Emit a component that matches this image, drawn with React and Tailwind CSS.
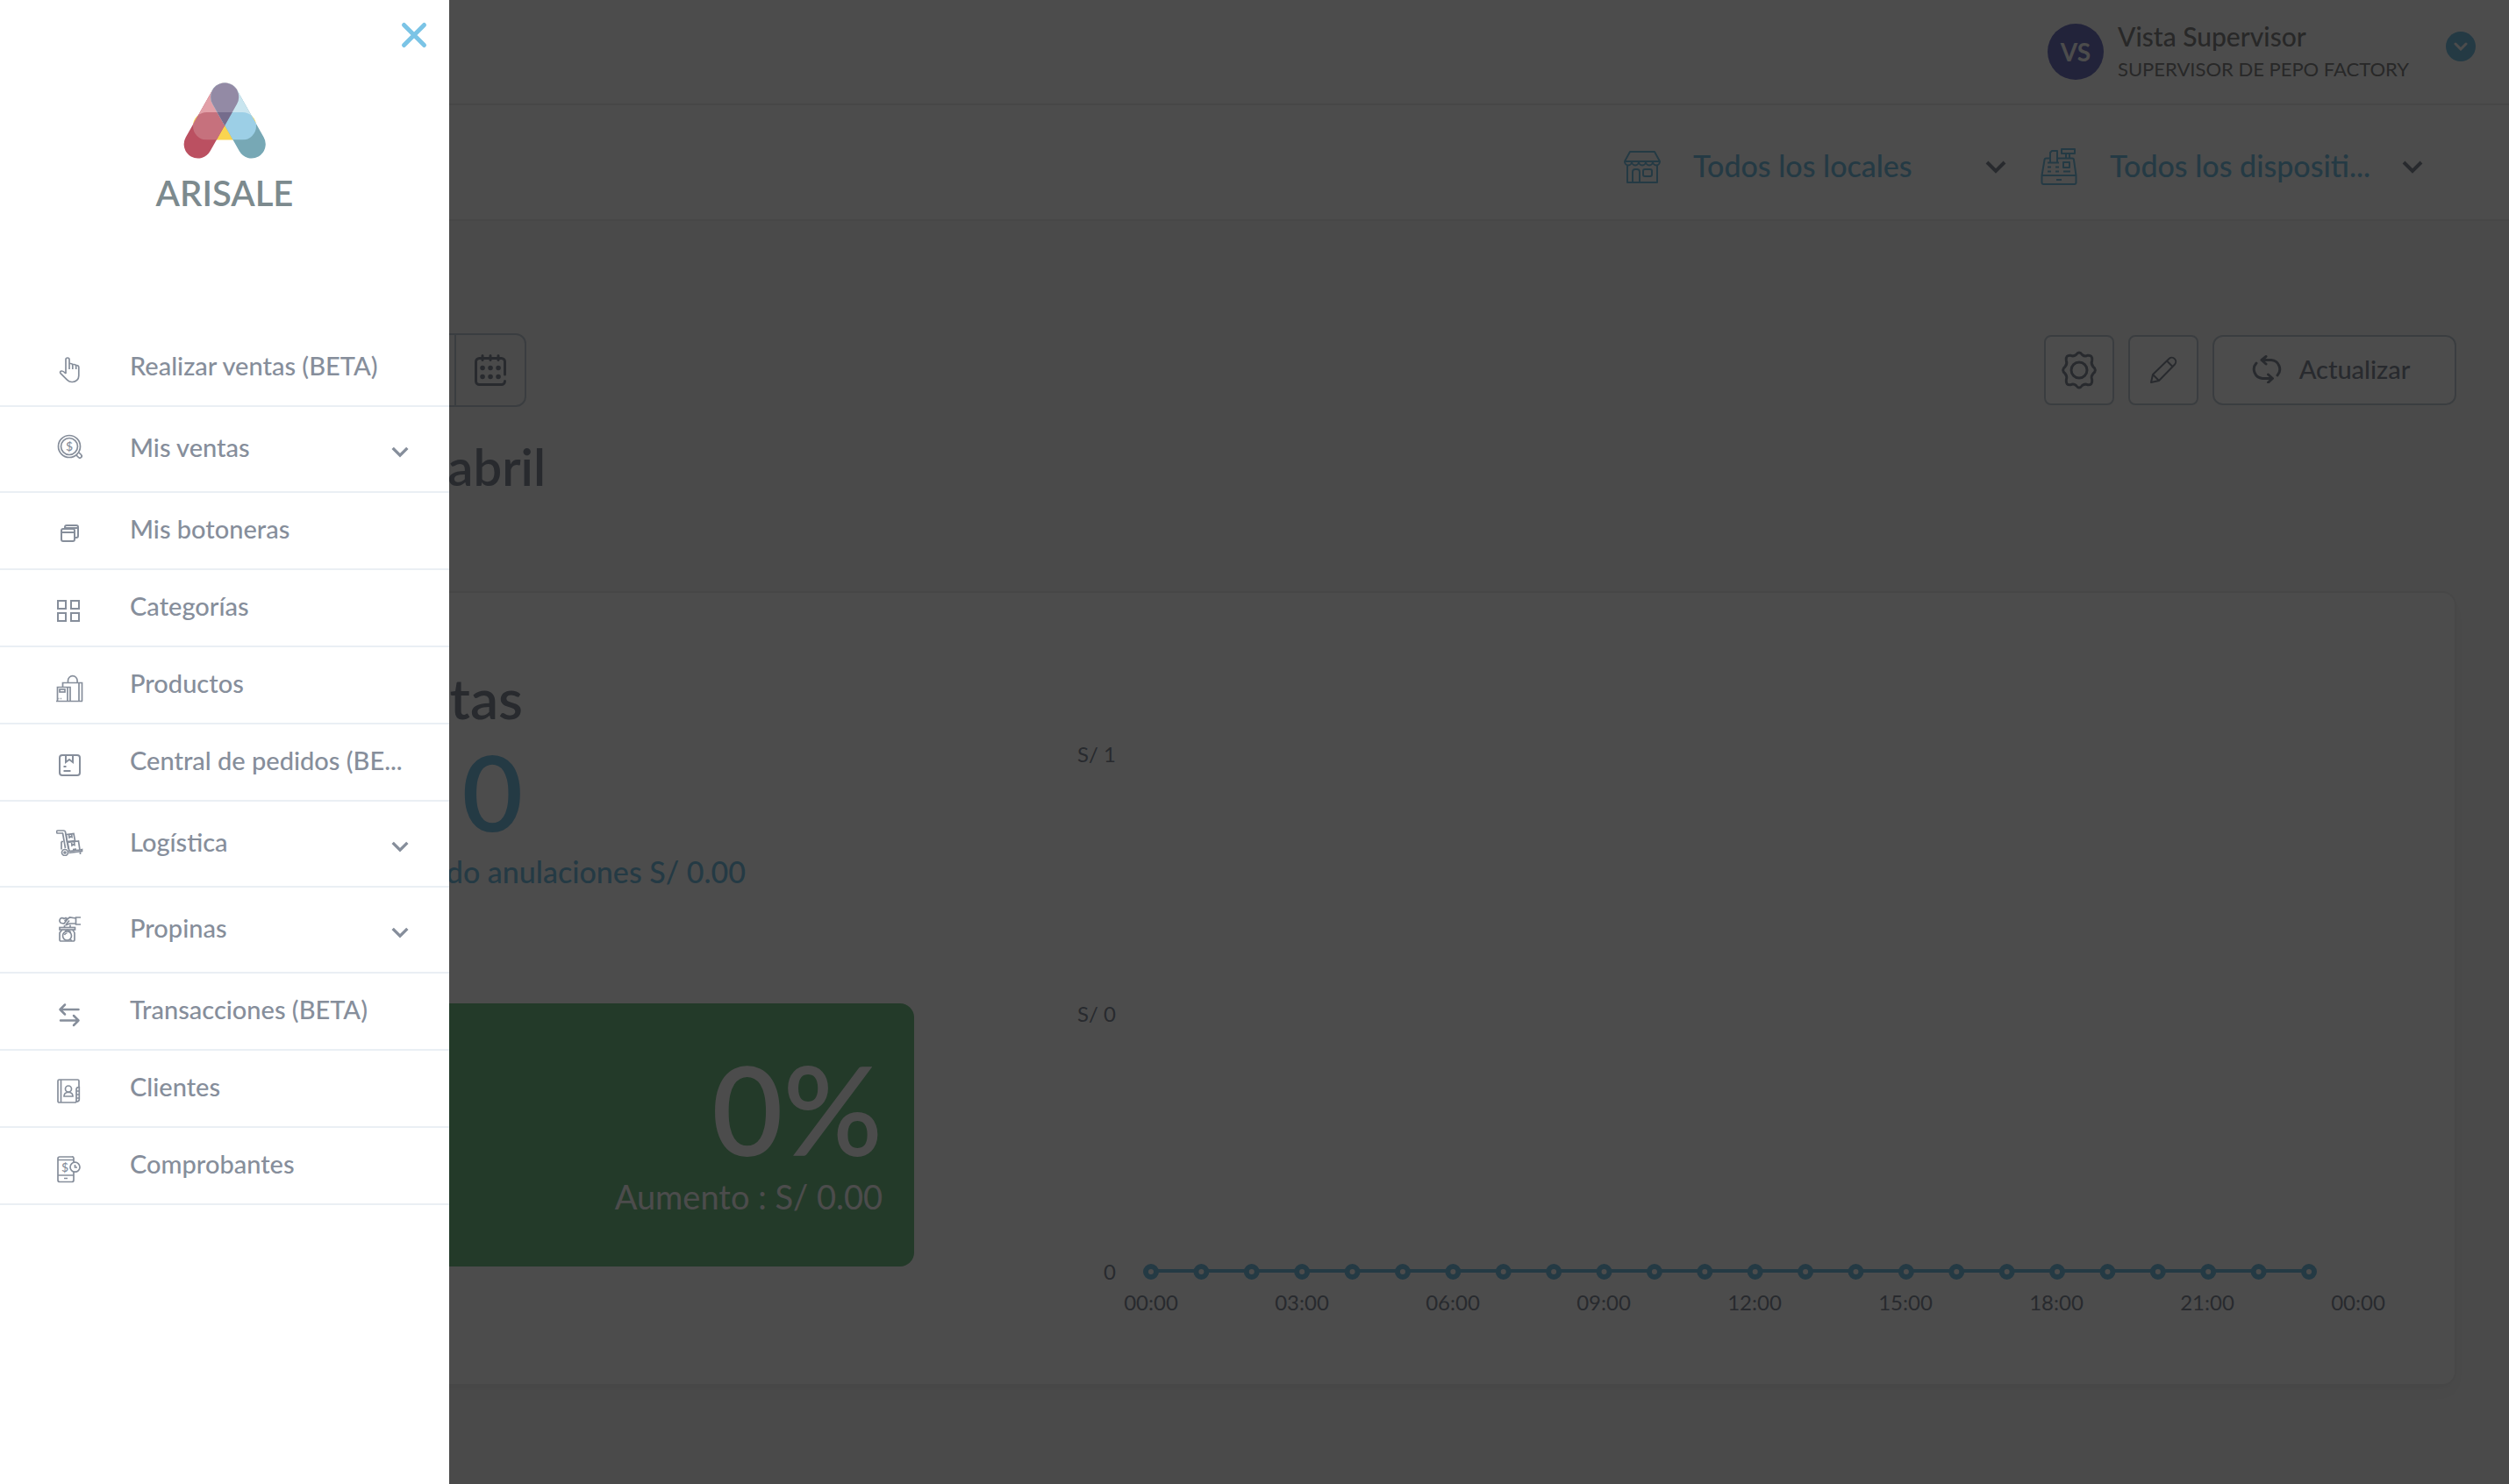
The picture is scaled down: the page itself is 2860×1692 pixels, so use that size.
import React from 'react';

const LEG = { x: -16, y: -16, width: 32, height: 94, rx: 16 };

const Logo = () => (
  <svg width="96" height="88" viewBox="208 93 96 88" aria-hidden="true">
    <defs>
      <clipPath id="leg-left">
        <rect {...LEG} transform="translate(256.2 109.5) rotate(29.5)" />
      </clipPath>
      <clipPath id="leg-right">
        <rect {...LEG} transform="translate(256.2 109.5) rotate(-29.5)" />
      </clipPath>
      <clipPath id="bar">
        <rect x="220" y="127" width="72" height="31.5" rx="15.7" />
      </clipPath>
    </defs>
    <rect x="220" y="127" width="72" height="31.5" rx="15.7" fill="#f9d44f" />
    <g clipPath="url(#leg-left)">
      <rect x="200" y="90" width="110" height="92" fill="#bb5061" />
      <rect x="200" y="90" width="110" height="51" fill="#e2a0a8" />
      <rect x="200" y="127" width="110" height="31.5" fill="#c6717d" clipPath="url(#bar)" />
    </g>
    <g clipPath="url(#leg-right)">
      <rect x="200" y="90" width="110" height="92" fill="#77a8b5" />
      <rect x="200" y="90" width="110" height="51" fill="#c9e5ef" />
      <rect x="200" y="127" width="110" height="31.5" fill="#9ccfe6" clipPath="url(#bar)" />
      <g clipPath="url(#leg-left)">
        <rect x="200" y="90" width="110" height="54" fill="#938aa5" />
        <rect x="200" y="127" width="110" height="17" fill="#756c8c" />
      </g>
    </g>
  </svg>
);

const Chevron = ({ className }) => (
  <svg className={className} viewBox="0 0 24 16" fill="none" stroke="currentColor" strokeWidth="4" aria-hidden="true">
    <path d="M2 3l10 10L22 3" />
  </svg>
);

const icons = {
  hand: (
    <path d="M11 19V3a2 2 0 0 1 4 0v11M15 7.5h1.5a2.3 2.3 0 0 1 2.3 2.3V14M18.8 8.5h1.6a2.3 2.3 0 0 1 2.3 2.3V14M22.7 9.5h.8a2.3 2.3 0 0 1 2.3 2.3v9.7a7 7 0 0 1-7 7h-1c-2 0-3.6-.8-5-2.2L5 18.6c-1-1.2-.2-2.6 1.3-2.6 2 0 3.2 1.4 4.7 3" />
  ),
  search: (
    <>
      <circle cx="15" cy="15" r="12.5" />
      <circle cx="15" cy="15" r="9.5" />
      <path d="M23 25l2.5 2.5a2 2 0 0 0 3-3L26 22" />
      <text x="15" y="20" textAnchor="middle" fontSize="14" fill="currentColor" stroke="none">$</text>
    </>
  ),
  windows: (
    <g strokeWidth="2">
      <rect x="6" y="10" width="15" height="14" rx="2" />
      <path d="M6 14h15M10 10V8a2 2 0 0 1 2-2h11a2 2 0 0 1 2 2v10a2 2 0 0 1-2 2h-2M10 9h15" />
    </g>
  ),
  grid: (
    <g strokeWidth="2">
      <rect x="2" y="4" width="9" height="9" />
      <rect x="17" y="4" width="9" height="9" />
      <rect x="2" y="18" width="9" height="9" />
      <rect x="17" y="18" width="9" height="9" />
    </g>
  ),
  bag: (
    <>
      <path d="M13.5 9.5V7a5.3 5.3 0 0 1 10.6 0v2.5M7.5 14V9.5h22v21M26 9.5v21M0 30.5h30M1.5 30.5v-16h14.5v16M13 14.5v16" />
      <rect x="4" y="17" width="6" height="3" />
      <path d="M2.5 27.5h1M5 27.5h1" />
    </>
  ),
  box: (
    <g strokeWidth="2">
      <rect x="4" y="4" width="23" height="23" rx="3" />
      <path d="M11 4v8l4-3 4 3V4M8.5 17h3M8.5 22h8" />
    </g>
  ),
  truck: (
    <>
      <path d="M8 6H2a1.5 1.5 0 0 1 0-3h6.5a2 2 0 0 1 2 1.5L14 24M7.5 6l3 17M6 15.5v9M6 15.5h2" />
      <path d="M11.5 7.5l8.500-1 1.5 8-9 1zM14.500 7.500l.5 3.5 1.5-1 1.5.5-.5-4M13 16.5l12.500-1.500 1.5 10-12 1.500zM17.500 16l.5 4 1.5-1 1.500.5-.5-4M19 24.500l4-.5" />
      <circle cx="10" cy="28" r="3.5" />
      <circle cx="10" cy="28" r="1" />
      <path d="M14.5 28.5l15-2v-2l-2 .5M27.5 27v3" />
    </>
  ),
  tips: (
    <>
      <path d="M28 4h-5.5v8H28M22.5 5l-7-1-6 4M22.5 11h-7l-5 2M15 7.5l-4 5M9 5.5a3 3 0 1 0-3 5l3 .5 4-5-2-1.5zM9.5 13v2M16 12.5V15" />
      <rect x="4" y="15.5" width="17.5" height="2.5" />
      <path d="M6.5 18c0 2-2.500 2-2.500 4v7.500a1.500 1.500 0 0 0 1.500 1.500h14a1.500 1.500 0 0 0 1.500-1.500V22c0-2-2-2-2-4" />
      <circle cx="12.5" cy="25" r="5" />
      <path d="M10 20l3-1.5 4 2.500M9.500 24a3 3 0 0 1 3-2M16 29.500l2 1" />
    </>
  ),
  swap: (
    <g strokeWidth="2.5" strokeLinecap="round" strokeLinejoin="round">
      <path d="M25.5 10H5M10 4.500L4.500 10l5.500 5.500M5 22.500h20.500M20 17l5.500 5.500L20 28" />
    </g>
  ),
  contacts: (
    <>
      <path d="M26 11V3.500A1.500 1.500 0 0 0 24.500 2H3.500A1.500 1.500 0 0 0 2 3.500v23A1.500 1.500 0 0 0 3.500 28h18a1.500 1.500 0 0 0 1.500-1.500M5.500 2v26" />
      <path d="M26.3 10.500c-2 0-3.300.8-3.300 2.500v14c2 0 3.300-.8 3.300-2.500zM23 15h3M23 19h3M23 23h3" />
      <circle cx="14" cy="12.5" r="3.5" />
      <path d="M9 21c0-2.500 1.500-4 3.500-4.500h3c2 .5 3.500 2 3.500 4.500z" />
    </>
  ),
  receipt: (
    <>
      <path d="M20 8.5V3.500A1.800 1.800 0 0 0 18 2H4a2 2 0 0 0-2 2v24.500a2 2 0 0 0 2 2h14a2 2 0 0 0 2-2V19M2 5.500h18M2 23h18M9 26.500h4" />
      <circle cx="21.5" cy="13.7" r="5.5" />
      <path d="M21.5 11v3H24" />
      <text x="10" y="19" textAnchor="middle" fontSize="14" fill="currentColor" stroke="none">$</text>
    </>
  ),
};

const menu = [
  { label: 'Realizar ventas (BETA)', icon: 'hand' },
  { label: 'Mis ventas', icon: 'search', children: true },
  { label: 'Mis botoneras', icon: 'windows' },
  { label: 'Categorías', icon: 'grid' },
  { label: 'Productos', icon: 'bag' },
  { label: 'Central de pedidos (BE...', icon: 'box' },
  { label: 'Logística', icon: 'truck', children: true },
  { label: 'Propinas', icon: 'tips', children: true },
  { label: 'Transacciones (BETA)', icon: 'swap' },
  { label: 'Clientes', icon: 'contacts' },
  { label: 'Comprobantes', icon: 'receipt' },
];

const MenuIcon = ({ name, className }) => (
  <svg className={`shrink-0 ${className}`} width="32" height="32" viewBox="0 0 32 32" fill="none" stroke="currentColor" strokeWidth="1.7" aria-hidden="true">
    {icons[name]}
  </svg>
);

const Sidebar = () => (
  <aside className="fixed inset-y-0 left-0 z-20 flex w-[512px] flex-col bg-white text-[#868e9b]">
    <div className="flex h-20 items-center justify-end pr-6">
      <button type="button" aria-label="Cerrar menú" className="text-[#7bc4e6]">
        <svg width="32" height="32" viewBox="0 0 32 32" stroke="currentColor" strokeWidth="5" strokeLinecap="round">
          <path d="M4.5 4.5l23 23M27.5 4.5l-23 23" />
        </svg>
      </button>
    </div>
    <div className="mt-3.5 flex h-[282px] flex-col items-center">
      <Logo />
      <div className="mt-3.5 text-[40px] leading-12 font-semibold text-[#7c8a8e]">ARISALE</div>
    </div>
    <nav>
      <ul>
        {menu.map((item) => (
          <li key={item.label} className="border-b-2 border-[#eaeff4]">
            {item.children ? (
              <button type="button" className="flex h-24 w-full items-center pr-[46px] pl-16 text-left text-[29px] font-medium">
                <MenuIcon name={item.icon} className="-mt-1" />
                <span className="ml-[52px] flex-1 pb-1">{item.label}</span>
                <Chevron className="mt-1.5 h-3.5 w-5" />
              </button>
            ) : (
              <a href="#" className="flex h-[86px] items-center pl-16 text-[29px] font-medium">
                <MenuIcon name={item.icon} className="mt-2" />
                <span className="ml-[52px] pb-1 whitespace-nowrap">{item.label}</span>
              </a>
            )}
          </li>
        ))}
      </ul>
    </nav>
  </aside>
);

const StoreIcon = () => (
  <svg width="42" height="42" viewBox="0 0 42 42" fill="none" stroke="currentColor" strokeWidth="2" strokeLinejoin="round" aria-hidden="true">
    <path d="M7 4h28l6 11H1zM1 15a4 4.5 0 0 0 8 0 4 4.5 0 0 0 8 0 4 4.5 0 0 0 8 0 4 4.5 0 0 0 8 0 4 4.5 0 0 0 8 0M4 19.5V39h34V19.5" />
    <path d="M10 39V27a3 3 0 0 1 3-3h2a3 3 0 0 1 3 3v12" />
    <rect x="22" y="24" width="10" height="8" rx="2" />
  </svg>
);

const RegisterIcon = () => (
  <svg width="42" height="42" viewBox="0 0 42 42" fill="none" stroke="currentColor" strokeWidth="2" strokeLinejoin="round" aria-hidden="true">
    <path d="M10 11.5H6.5a2 2 0 0 0-2 2L1.500 31v8a2 2 0 0 0 2 2h35a2 2 0 0 0 2-2v-8L38 13.500a2 2 0 0 0-2-2H19M1.500 31h39M18 36h6" />
    <path d="M11 16V5l2-2h6v13M8 16.5h13M8 21.5h4M17 21.5h4M8 26.5h4M17 26.5h4M26 26.5h8" />
    <rect x="24" y="1" width="15" height="5" />
    <path d="M29 6v5M33 6v5" />
    <rect x="26" y="16" width="7" height="6" />
  </svg>
);

const Picker = ({ icon, label, name }) => (
  <label className="flex w-[436px] items-center text-[#7bc1e3]">
    <span className="w-[79px]">{icon}</span>
    <span className="relative flex-1">
      <select aria-label={name} className="w-full appearance-none bg-transparent pb-1 text-[34px] font-medium outline-none">
        <option>{label}</option>
      </select>
      <Chevron className="pointer-events-none absolute top-1/2 right-0 h-4 w-6 -translate-y-1/2 text-[#868e9b]" />
    </span>
  </label>
);

const Header = () => (
  <header className="bg-white">
    <div className="flex h-[120px] items-center justify-end border-b-2 border-[#ededed] pr-[38px]">
      <div className="flex size-16 items-center justify-center rounded-full bg-[#7275c1] text-[28px] font-bold text-white">VS</div>
      <div className="ml-4 w-[340px] whitespace-nowrap text-[#868686]">
        <div className="text-[30px] leading-10 font-medium">Vista Supervisor</div>
        <div className="text-[22px] leading-9">SUPERVISOR DE PEPO FACTORY</div>
      </div>
      <button type="button" aria-label="Menú de usuario" className="mb-3 ml-[34px] flex size-[34px] items-center justify-center rounded-full bg-[#7bc1e3] text-white">
        <svg width="16" height="10" viewBox="0 0 16 10" fill="none" stroke="currentColor" strokeWidth="3" strokeLinecap="round">
          <path d="M2 2l6 6 6-6" />
        </svg>
      </button>
    </div>
    <div className="flex h-[132px] items-center justify-end gap-[39px] border-b-2 border-[#ededed] pt-2.5 pr-[98px]">
      <Picker icon={<StoreIcon />} label="Todos los locales" name="Local" />
      <Picker icon={<RegisterIcon />} label="Todos los dispositi..." name="Dispositivo" />
    </div>
  </header>
);

const Toolbar = () => (
  <div className="flex items-center justify-between text-[#868e9b]">
    <div className="flex h-[84px] w-[540px] justify-end rounded-xl border-2 border-[#c4ced6]">
      <button type="button" aria-label="Elegir fecha" className="flex w-20 items-center justify-center border-l-2 border-[#c4ced6]">
        <svg width="36" height="36" viewBox="0 0 36 36" fill="none" stroke="currentColor" strokeWidth="3" strokeLinecap="round">
          <path d="M34.5 23V8.5a4 4 0 0 0-4-4h-25a4 4 0 0 0-4 4v22a4 4 0 0 0 4 4h25a4 4 0 0 0 4-4M9 1.5v5M18 1.5v5M27 1.5v5" />
          <path strokeWidth="5.5" d="M9 15.5h.1M18 15.5h.1M27 15.5h.1M9 25.5h.1M18 25.5h.1M27 25.5h.1" />
        </svg>
      </button>
    </div>
    <div className="flex gap-4">
      <button type="button" aria-label="Configuración" className="flex size-20 items-center justify-center rounded-lg border-2 border-[#c4ced6] bg-white">
        <svg width="44" height="44" viewBox="0 0 44 44" fill="none" stroke="currentColor" strokeWidth="3" strokeLinejoin="round">
          <circle cx="22" cy="22" r="9" />
          <path d="M18.5 4.500q3.500-5 7 0 3 2.500 6 .8 6-1 5.200 5.700-1.500 3.500 1.200 7 5 4 0 8-2.700 3-1.200 7 .8 6.500-5.200 5.700-3-1.500-6 .8-3.500 5-7 0-3-2.500-6-.8-6 1-5.200-5.700 1.500-3.500-1.200-7-5-4 0-8 2.700-3 1.200-7-.8-6.500 5.200-5.700 3 1.500 6-.8z" />
        </svg>
      </button>
      <button type="button" aria-label="Editar" className="flex size-20 items-center justify-center rounded-lg border-2 border-[#c4ced6] bg-white">
        <svg width="32" height="32" viewBox="0 0 32 32" fill="none" stroke="currentColor" strokeWidth="2" strokeLinejoin="round">
          <path d="M2 30l2-9L22.5 3a4.600 4.600 0 0 1 6.500 6.500L11 28zM4 21l7 7M20 5.500l6.500 6.500" />
        </svg>
      </button>
      <button type="button" className="flex h-20 w-[278px] items-center justify-center gap-5 rounded-xl border-2 border-[#c4ced6] bg-white pr-2 pb-0.5 text-[29px] font-medium">
        <svg width="34" height="32" viewBox="0 0 34 32" fill="none" stroke="currentColor" strokeWidth="3" strokeLinecap="round" strokeLinejoin="round">
          <path d="M5 9a10.5 10.5 0 0 0 7 17.5h11M18.5 22l5 4.5-5 4.5M29 23a10.5 10.5 0 0 0-7-17.5H11M16 1.500l-5 4 5 4.500" />
        </svg>
        Actualizar
      </button>
    </div>
  </div>
);

const hours = Array.from({ length: 24 }, (_, i) => 112 + (i * 1320) / 23);
const ticks = ['00:00', '03:00', '06:00', '09:00', '12:00', '15:00', '18:00', '21:00', '00:00'];

const SalesChart = () => (
  <svg viewBox="0 0 1560 680" className="w-full text-[24px]" fill="#868e9b">
    <g textAnchor="end">
      <text x="72" y="29">S/ 1</text>
      <text x="72" y="325">S/ 0</text>
      <text x="72" y="619">0</text>
    </g>
    <g textAnchor="middle">
      {ticks.map((tick, i) => (
        <text key={i} x={112 + i * 172} y="654">{tick}</text>
      ))}
    </g>
    <path d="M112 609H1432" stroke="#7bc1e3" strokeWidth="4" />
    {hours.map((x) => (
      <circle key={x} cx={x} cy="610" r="6" fill="#fff" stroke="#7bc1e3" strokeWidth="6" />
    ))}
  </svg>
);

const SalesCard = () => (
  <section className="mt-[110px] flex rounded-2xl border-2 border-[#ededed] bg-white pr-[38px] pb-[58px] pl-10 shadow-lg shadow-black/3">
    <div className="w-[940px] shrink-0 pt-20">
      <div className="w-[494px] text-right">
        <h2 className="text-[64px] leading-20 font-semibold text-[#868e9b]">Ventas</h2>
        <div className="text-[120px] leading-[132px] font-semibold text-[#7bc1e3]">0</div>
      </div>
      <p className="mt-0.5 w-[748px] text-right text-[34px] leading-12 font-medium text-[#7bc1e3]">Considerando anulaciones S/ 0.00</p>
      <div className="mt-[126px] flex h-[300px] flex-col items-end justify-center rounded-2xl bg-[#75c189] pr-9 text-white">
        <div className="text-[140px] leading-[136px] font-semibold">0%</div>
        <div className="mt-1 text-[38px] leading-14">Aumento : S/ 0.00</div>
      </div>
    </div>
    <div className="ml-[158px] flex-1 pt-[164px]">
      <SalesChart />
    </div>
  </section>
);

const App = () => (
  <div className="min-h-screen bg-[#f7f7f7] font-['Lato',sans-serif]">
    <Header />
    <main className="px-[60px] pt-32">
      <Toolbar />
      <h1 className="mt-9 w-[562px] text-right text-[58px] leading-16 font-semibold text-[#868e9b]">abril</h1>
      <SalesCard />
    </main>
    <div className="fixed inset-0 z-10 bg-black/70" />
    <Sidebar />
  </div>
);

export default App;
